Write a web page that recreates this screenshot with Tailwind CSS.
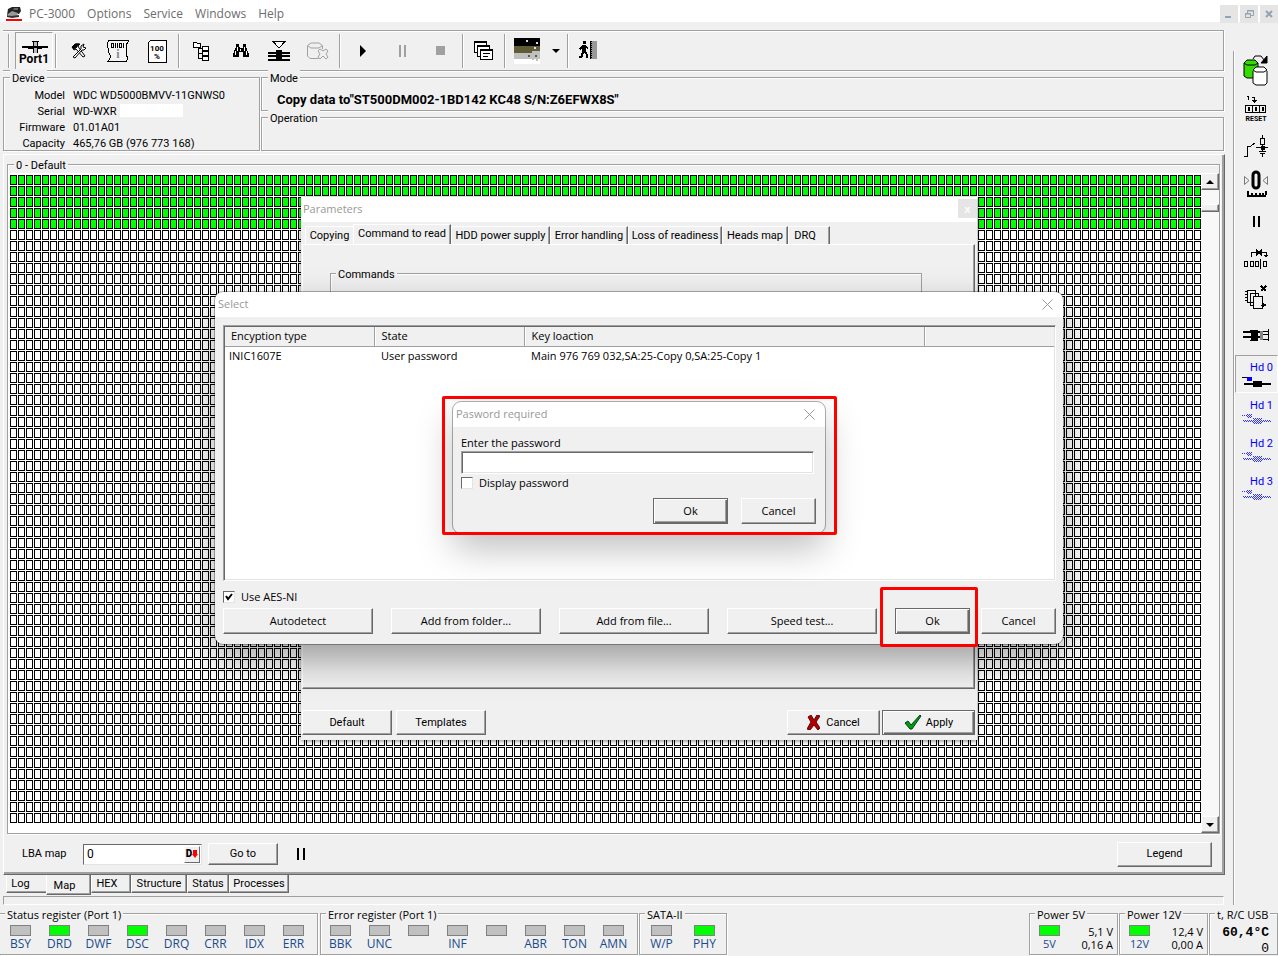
<!DOCTYPE html>
<html lang="en">

<head>
    <meta charset="UTF-8">
    <meta name="viewport" content="width=device-width, initial-scale=1.0">
    <title>PC-3000</title>
    <script src="https://cdn.jsdelivr.net/npm/@tailwindcss/browser@4"></script>
</head>

<body class="bg-[#f0f0f0] text-black font-['Roboto',sans-serif] text-[11px] leading-4">
    <div class="relative flex flex-col min-h-screen overflow-hidden">

        <!-- menu -->
        <header class="flex items-center bg-white h-[22px] pl-1.5 pt-1.5 font-['Open_Sans',sans-serif] text-xs text-[#6d6d6d]">
            <svg class="mr-[7px]" width="16" height="16" viewBox="0 0 16 16">
                <path d="M2 3L6 1H14L15 5L13 8L5 7L1 9Z" fill="#222" />
                <path d="M2 8L6 5L12 7L11 10L4 11Z" fill="#999" />
                <path d="M1 9L5 10L13 9V11L6 12L1 11Z" fill="#333" />
                <path d="M8 2H12V4H7Z" fill="#666" />
                <path d="M0 14H16" stroke="#f00" stroke-width="2" />
            </svg>
            <nav class="flex gap-3">
                <a href="#">PC-3000</a>
                <a href="#">Options</a>
                <a href="#">Service</a>
                <a href="#">Windows</a>
                <a href="#">Help</a>
            </nav>
            <div class="flex gap-0.5 ml-auto">
                <button class="w-[18px] h-[18px] bg-[#e5e5e5]" aria-label="Minimize"><svg width="18" height="18"><path d="M5 12H11" stroke="#94a3b3" stroke-width="2" /></svg></button>
                <button class="w-[18px] h-[18px] bg-[#e5e5e5]" aria-label="Restore"><svg width="18" height="18" fill="none" stroke="#94a3b3"><path d="M7.500 8V5.500H13.500V10.500H11M7 6H14M5.500 8.500H10.500V12.500H5.500ZM5 9H11" /></svg></button>
                <button class="w-[18px] h-[18px] bg-[#e5e5e5]" aria-label="Close"><svg width="18" height="18"><path d="M6 6L12 12M12 6L6 12" stroke="#94a3b3" stroke-width="2" /></svg></button>
            </div>
        </header>

        <div class="flex flex-1">
            <main class="flex flex-col flex-1 min-w-0 pl-[3px] pr-[9px] pt-2">

                <!-- toolbar -->
                <div class="flex items-center h-[41px] border-y border-r border-[#a0a0a0] shadow-[1px_1px_#fff,inset_0_1px_#fff] pl-[5px]">
                    <div class="w-0.5 h-[34px] border-l border-[#a0a0a0] bg-white mr-[5px]"></div>
                    <button class="w-[38px] h-[38px] border border-t-[#a0a0a0] border-l-[#a0a0a0] border-r-white border-b-white bg-[#f4f4f4]" aria-label="Port1">
                        <svg width="36" height="36" shape-rendering="crispEdges">
                            <path d="M6 14H32M12 15H26" stroke="#000" stroke-width="2" />
                            <path d="M18 8H21V20H18Z" fill="#bbb" />
                            <path d="M17.500 8V20M21.500 8V20M16 8.500H23" stroke="#000" fill="none" />
                            <path d="M6 14H32" stroke="#000" stroke-width="2" />
                            <text x="18" y="30" text-anchor="middle" font-family="Roboto" font-weight="bold" font-size="12">Port1</text>
                        </svg>
                    </button>
                    <div class="w-0.5 h-[34px] border-l border-[#a0a0a0] bg-white mx-0.5"></div>
                    <button class="w-[39px] flex justify-center" aria-label="Utilities">
                        <svg width="16" height="16" fill="none" stroke="#000">
                            <path d="M1 4L5 1H9L7 3L8 5L14 13L12 14L5 6L3 7Z" fill="#fff" />
                            <path d="M2 14L10 6L10 3L13 1L12 4L15 5L13 7H11L4 15Z" fill="#fff" />
                            <path d="M1 4L4 1H8L5 5L3 6Z" fill="#000" />
                        </svg>
                    </button>
                    <button class="w-[39px] flex justify-center" aria-label="Information">
                        <svg width="24" height="24" fill="none" stroke="#000" shape-rendering="crispEdges">
                            <path d="M3 1.500H22V3L20 6V16L22 19L20 22.500H2L4 19V16L2 12V9L1 4Z" fill="#f4f4f4" />
                            <path d="M5.500 4.500H7.500V8.500H5.500ZM9.500 4V9M11.500 4V9M13.500 4.500H15.500V8.500H13.500ZM17.500 4V9" />
                            <text x="12" y="19" text-anchor="middle" font-family="Liberation Serif" font-weight="bold" font-size="12" fill="#888" stroke="none">i</text>
                        </svg>
                    </button>
                    <button class="w-[39px] flex justify-center" aria-label="Progress">
                        <svg width="20" height="24" shape-rendering="crispEdges">
                            <path d="M1 4L4 1H19V23H1Z" fill="#fff" stroke="#000" />
                            <text x="10" y="12" text-anchor="middle" font-family="Roboto" font-weight="bold" font-size="8">100</text>
                            <text x="10" y="20" text-anchor="middle" font-family="Roboto" font-weight="bold" font-size="8">%</text>
                        </svg>
                    </button>
                    <div class="w-0.5 h-[34px] border-l border-[#a0a0a0] bg-white mx-0.5"></div>
                    <button class="w-[39px] flex justify-center" aria-label="Tree">
                        <svg width="17" height="20" fill="#fff" stroke="#000" shape-rendering="crispEdges">
                            <path d="M.5 1.500H3.500L4.500 2.500H7.500V6.500H.5ZM9.500 5.500H15.500V9.500H9.500ZM9.500 10.500H15.500V14.500H9.500ZM9.500 15.500H15.500V19.500H9.500Z" />
                            <path d="M5.500 7V17.500H9M5 12.500H9M5 7.500H9M12 5H16M12 10H16M12 15H16" fill="none" />
                        </svg>
                    </button>
                    <button class="w-[39px] flex justify-center" aria-label="Search">
                        <svg width="16" height="16" shape-rendering="crispEdges">
                            <path d="M3 1H6V4L7 5H9L10 4V1H13V4L16 11V14H10V9H6V14H0V11L3 4Z" />
                            <path d="M4.500 4V8M2.500 8V12M11.500 4V8M13.500 8V12M7.500 6V8" stroke="#fff" />
                        </svg>
                    </button>
                    <button class="w-[38px] flex justify-center" aria-label="Drive">
                        <svg width="22" height="22" shape-rendering="crispEdges">
                            <path d="M5 1.500H17L11 8Z" fill="#fff" stroke="#000" />
                            <path d="M0 12.500H22M0 19.500H22" stroke="#000" stroke-width="2" />
                            <path d="M0 15.500H22" stroke="#000" stroke-width="2" />
                            <path d="M8 10H14V21H8Z" />
                        </svg>
                    </button>
                    <button class="w-[39px] flex justify-center" aria-label="Clear database" disabled>
                        <svg width="24" height="20" fill="none" stroke="#a0a0a0">
                            <path d="M1.500 5V15L4 17.500H12L14 16M16.500 8V5" />
                            <path d="M1.500 4.500L5 2H13L16.500 4.500L13 7H5Z" />
                            <path d="M14 8L17 10L20 8L22 10L20 13L22 16L20 18L17 15L14 18L12 16L14 13L12 10Z" fill="#f0f0f0" />
                        </svg>
                    </button>
                    <div class="w-0.5 h-[34px] border-l border-[#a0a0a0] bg-white mx-0.5"></div>
                    <button class="w-[39px] flex justify-center" aria-label="Start"><svg width="7" height="12"><path d="M1 0L7 6L1 12Z" /></svg></button>
                    <button class="w-[39px] flex justify-center" aria-label="Pause" disabled><svg width="8" height="12"><path d="M2 0V12M7 0V12" stroke="#a0a0a0" stroke-width="2" /></svg></button>
                    <button class="w-[39px] flex justify-center" aria-label="Stop" disabled><svg width="9" height="9"><path d="M0 0H9V9H0Z" fill="#a0a0a0" /></svg></button>
                    <div class="w-0.5 h-[34px] border-l border-[#a0a0a0] bg-white mx-0.5"></div>
                    <button class="w-9 flex justify-center" aria-label="Windows">
                        <svg width="20" height="20" fill="#fff" stroke="#000" shape-rendering="crispEdges">
                            <path d="M.5 .5H12.500V11.500H.5Z" />
                            <path d="M0 1.500H13" />
                            <path d="M3.500 4.500H15.500V15.500H3.500Z" />
                            <path d="M3 5.500H16" />
                            <path d="M6.500 8.500H18.500V18.500H6.500Z" />
                            <path d="M6 9.500H19M9 12.500H16M9 15.500H14" />
                        </svg>
                    </button>
                    <div class="w-0.5 h-[34px] border-l border-[#a0a0a0] bg-white mx-0.5"></div>
                    <button class="w-[38px] flex justify-center" aria-label="Map view">
                        <svg width="26" height="26" shape-rendering="crispEdges">
                            <path d="M0 0H26V8H0Z" />
                            <path d="M0 8H26V13H18V15H0Z" fill="#5f5c36" />
                            <path d="M0 15H18V13H26V21H0Z" fill="#c0c0c0" />
                            <path d="M0 21H26V26H0Z" fill="#fff" />
                            <path d="M12 2H14V4H12ZM22 4H24V6H22ZM20 9H22V11H20Z" fill="#ddd" />
                            <path d="M6 13H8V15H6ZM14 17H16V19H14ZM21 17H23V19H21Z" fill="#5f5c36" />
                            <path d="M18 20H20V22H18ZM22 21H24V23H22Z" fill="#c0c0c0" />
                        </svg>
                    </button>
                    <button class="w-5 flex justify-center" aria-label="Map view options"><svg width="8" height="4"><path d="M0 0H8L4 4Z" /></svg></button>
                    <div class="w-0.5 h-[34px] border-l border-[#a0a0a0] bg-white mx-px"></div>
                    <button class="w-9 flex justify-center" aria-label="Exit">
                        <svg width="19" height="19" shape-rendering="crispEdges">
                            <path d="M4 0H7V3H4ZM3 4H7L9 7L8 8L7 7V10L9 14V17H7V14L5 12L3 17H0V15H2L3 10V7L1 9L0 8Z" />
                            <path d="M11 0H18V18H11Z" fill="#999" />
                            <path d="M12 0V18" stroke="#000" stroke-width="2" stroke-dasharray="1 1" />
                            <path d="M11.500 0V18" stroke="#000" />
                        </svg>
                    </button>
                </div>

                <!-- device / mode / operation -->
                <div class="flex gap-px -mt-0.5">
                    <fieldset class="w-[257px] border border-[#a0a0a0] shadow-[1px_1px_#fff,inset_1px_1px_#fff] h-[82px] pt-[3px]">
                        <legend class="ml-1.5 px-0.5 pt-1 leading-3 bg-[#f0f0f0]">Device</legend>
                        <dl class="grid grid-cols-[61px_1fr] gap-x-2">
                            <dt class="text-right">Model</dt>
                            <dd>WDC WD5000BMVV-11GNWS0</dd>
                            <dt class="text-right">Serial</dt>
                            <dd class="flex">WD-WXR<span class="bg-white w-[63px] h-[13px] ml-1"></span></dd>
                            <dt class="text-right">Firmware</dt>
                            <dd>01.01A01</dd>
                            <dt class="text-right">Capacity</dt>
                            <dd>465,76 GB (976 773 168)</dd>
                        </dl>
                    </fieldset>
                    <div class="flex-1 flex flex-col">
                        <fieldset class="border border-[#a0a0a0] shadow-[1px_1px_#fff,inset_1px_1px_#fff] h-[42px]">
                            <legend class="ml-1.5 px-0.5 pt-1 leading-3 bg-[#f0f0f0]">Mode</legend>
                            <p class="pl-[15px] pt-[7px] text-[13px] leading-4 font-bold">Copy data to"ST500DM002-1BD142 KC48 S/N:Z6EFWX8S"</p>
                        </fieldset>
                        <fieldset class="border border-[#a0a0a0] shadow-[1px_1px_#fff,inset_1px_1px_#fff] h-[42px] -mt-0.5">
                            <legend class="ml-1.5 px-0.5 pt-1 leading-3 bg-[#f0f0f0]">Operation</legend>
                        </fieldset>
                    </div>
                </div>

                <!-- surface map -->
                <section class="flex-1 flex flex-col mt-[3px] -mr-px border border-t-white border-l-white border-r-[#696969] border-b-[#696969] shadow-[inset_-2px_-2px_#a0a0a0]">
                    <fieldset class="flex-1 flex flex-col ml-[3px] mr-1 mt-px border border-[#a0a0a0] shadow-[inset_1px_1px_#fff,1px_1px_#fff] min-w-0">
                        <legend class="ml-1.5 px-0.5 pt-1 leading-3 bg-[#f0f0f0]">0 - Default</legend>
                        <div class="flex flex-1 pt-px">
                            <div class="flex-1 bg-white pl-0.5 pt-0.5">
                                <svg class="block w-full" height="649" shape-rendering="crispEdges">
                                    <defs>
                                        <pattern id="cell" width="8" height="11" patternUnits="userSpaceOnUse">
                                            <path d="M0 0H7V10H0ZM1 1V9H6V1Z" fill-rule="evenodd" />
                                        </pattern>
                                        <pattern id="done" width="8" height="11" patternUnits="userSpaceOnUse">
                                            <path d="M0 0H7V10H0Z" />
                                            <path d="M1 1H6V9H1Z" fill="#0f0" />
                                        </pattern>
                                    </defs>
                                    <rect width="100%" height="55" fill="url(#done)" />
                                    <rect y="55" width="100%" height="594" fill="url(#cell)" />
                                </svg>
                            </div>
                            <div class="w-[18px] flex flex-col bg-[#f8f8f8]">
                                <button class="h-[17px] flex items-center justify-center bg-[#f0f0f0] border border-t-white border-l-white border-r-[#696969] border-b-[#696969] shadow-[inset_-1px_-1px_#a0a0a0]" aria-label="Scroll up"><svg width="8" height="4"><path d="M0 4H8L4 0Z" /></svg></button>
                                <div class="h-2 mt-3.5 bg-[#f0f0f0] border border-t-white border-l-white border-r-[#696969] border-b-[#696969] shadow-[inset_-1px_-1px_#a0a0a0]"></div>
                                <button class="h-[17px] mt-auto flex items-center justify-center bg-[#f0f0f0] border border-t-white border-l-white border-r-[#696969] border-b-[#696969] shadow-[inset_-1px_-1px_#a0a0a0]" aria-label="Scroll down"><svg width="8" height="4"><path d="M0 0H8L4 4Z" /></svg></button>
                            </div>
                        </div>
                    </fieldset>
                    <div class="flex items-center h-10 pl-[18px] pr-3">
                        <label for="lba" class="w-[61px]">LBA map</label>
                        <div class="flex w-[119px] h-[21px] bg-white border border-t-[#696969] border-l-[#696969] border-r-[#e3e3e3] border-b-[#e3e3e3] p-px">
                            <input id="lba" class="flex-1 min-w-0 pl-0.5 text-xs outline-none" value="0">
                            <button class="w-4 bg-[#f0f0f0] border border-t-white border-l-white border-r-[#696969] border-b-[#696969] flex items-center justify-center text-[10px] font-black" aria-label="Decimal">D<svg width="6" height="8"><path d="M1 0H5V4H6L3 8L0 4H1Z" fill="#f00" /></svg></button>
                        </div>
                        <button class="w-[70px] h-[22px] ml-1.5 border border-t-white border-l-white border-r-[#696969] border-b-[#696969] shadow-[inset_-1px_-1px_#a0a0a0]">Go to</button>
                        <button class="ml-[19px]" aria-label="Pause map"><svg width="8" height="12"><path d="M1 0V12M7 0V12" stroke="#000" stroke-width="2" /></svg></button>
                        <button class="w-[95px] h-[25px] ml-auto border border-t-white border-l-white border-r-[#696969] border-b-[#696969] shadow-[inset_-1px_-1px_#a0a0a0]">Legend</button>
                    </div>
                </section>

                <!-- page tabs -->
                <div class="flex items-start h-[21px] pl-[3px]">
                    <button class="h-[18px] w-10 pr-3 border-l border-b border-l-white border-b-[#696969] shadow-[inset_0_-1px_#a0a0a0]">Log</button>
                    <button class="h-5 w-[45px] pr-2 pt-0.5 border border-t-0 border-l-white border-[#696969] shadow-[inset_-1px_-1px_#a0a0a0]">Map</button>
                    <button class="h-[18px] w-10 pr-2 border border-t-0 border-l-white border-[#696969] shadow-[inset_-1px_-1px_#a0a0a0]">HEX</button>
                    <button class="h-[18px] w-14 border border-t-0 border-l-white border-[#696969] shadow-[inset_-1px_-1px_#a0a0a0]">Structure</button>
                    <button class="h-[18px] w-[42px] border border-t-0 border-l-white border-[#696969] shadow-[inset_-1px_-1px_#a0a0a0]">Status</button>
                    <button class="h-[18px] w-[60px] border border-t-0 border-l-white border-[#696969] shadow-[inset_-1px_-1px_#a0a0a0]">Processes</button>
                </div>
                <div class="h-[9px] border border-t-[#a0a0a0] border-l-[#a0a0a0] border-r-white border-b-white"></div>
            </main>

            <!-- side toolbar -->
            <aside class="w-[45px] mt-[29px] border-l border-[#a0a0a0] shadow-[inset_1px_0_#fff] flex flex-col items-center">
                <button class="h-[38px] flex items-center" aria-label="Copy data">
                    <svg width="26" height="31" stroke="#000">
                        <path d="M1 8V21L4 23H13L15 21V8" fill="#33dd00" />
                        <path d="M1 8L4 5H12L15 8L12 10H4Z" fill="#33dd00" />
                        <path d="M10 16V28L13 30H22L24 28V16" fill="#fff" />
                        <path d="M10 15L13 12H21L24 15L21 17H13Z" fill="#fff" />
                        <path d="M10 4L12 1H18L21 5" fill="none" />
                        <path d="M24 1V8H18Z" fill="#000" />
                    </svg>
                </button>
                <button class="h-[38px] flex items-center" aria-label="Reset">
                    <svg width="24" height="28" fill="none" stroke="#000" shape-rendering="crispEdges">
                        <path d="M3 2.500H4.500V6M8 3.500H10.500V7" />
                        <path d="M8 6H13L10.500 9Z" fill="#000" stroke="none" />
                        <path d="M1 11.500H22M1 18.500H22M1.500 12V18M8.500 12V18M15.500 12V18M21.500 12V18" />
                        <path d="M4.500 13.500H5.500V16.500H4.500ZM11.500 13.500H12.500V16.500H11.500ZM18.500 13.500H19.500V16.500H18.500Z" />
                        <text x="12" y="27" text-anchor="middle" font-family="Roboto" font-weight="bold" font-size="7" fill="#000" stroke="none">RESET</text>
                    </svg>
                </button>
                <button class="h-[37px] flex items-center" aria-label="Power switch">
                    <svg width="24" height="26" fill="none" stroke="#000" shape-rendering="crispEdges">
                        <path d="M0 23.500H4M3.500 24V13.500H6L11 10M12 14.500H24M18.500 2V5M16.500 5H20.500V11H16.500ZM18.500 11V18M15 18.500H22M16 20.500H21M18.500 20V24" />
                        <path d="M17 13H20V16H17Z" fill="#000" />
                    </svg>
                </button>
                <button class="h-[38px] flex items-center" aria-label="Head calibration">
                    <svg width="24" height="28" fill="none" stroke="#000">
                        <path d="M.5 7.500V15.500L5 11.500ZM23.500 7.500V15.500L19 11.500Z" stroke="#777" />
                        <rect x="9" y="3" width="6" height="16" rx="3" stroke-width="3" />
                        <path d="M3 26.500H22M3.500 22V26M7.500 24V26M11.500 24V26M15.500 24V26M18.500 24V26M21.500 22V26" stroke-width="2" shape-rendering="crispEdges" />
                    </svg>
                </button>
                <button class="h-[38px] flex items-center" aria-label="Pause"><svg width="7" height="11"><path d="M1 0V11M6 0V11" stroke="#000" stroke-width="2" /></svg></button>
                <button class="h-[37px] flex items-center" aria-label="Skip sector">
                    <svg width="24" height="20" fill="none" stroke="#000" shape-rendering="crispEdges">
                        <path d="M7.500 8V3.500H22.500V7M.5 12.500H3.500V17.500H.5ZM6.500 12.500H9.500V17.500H6.500ZM11.500 12.500H14.500V17.500H11.500ZM16.500 10V20M19.500 12.500H22.500V17.500H19.500Z" />
                        <path d="M12 1L18 6M18 1L12 6" stroke-width="2" />
                        <path d="M19 6H24L22 9Z" fill="#000" stroke="none" />
                    </svg>
                </button>
                <button class="h-10 flex items-center" aria-label="Cancel pages">
                    <svg width="24" height="24" fill="#f0f0f0" stroke="#000" shape-rendering="crispEdges">
                        <path d="M3.500 5.500H11.500V17.500H3.500ZM6.500 8.500H14.500V20.500H6.500Z" />
                        <path d="M9.500 11.500H18.500V23.500H9.500Z" />
                        <path d="M1 6.500H3M1 9.500H3M1 12.500H3M1 15.500H3M17 20.500H22" />
                        <path d="M17 1L22 6M22 1L17 6" stroke-width="2" />
                        <path d="M18 18L22 20L18 22Z" fill="#000" />
                    </svg>
                </button>
                <button class="h-9 flex items-center" aria-label="Heads">
                    <svg width="28" height="14" fill="none" stroke="#000" shape-rendering="crispEdges">
                        <path d="M1 4H20M1 9H20" stroke-width="2" />
                        <path d="M8 2.500H16M8 12.500H16M20 6.500H27M19 3.500H26M19 11.500H26M26.500 1V13" />
                        <path d="M9 3H15V11H9Z" fill="#000" />
                        <path d="M19 3V12" stroke="#888" stroke-width="3" />
                    </svg>
                </button>
                <div id="heads" class="self-stretch flex flex-col pl-px pt-0.5 text-[#0000ff]"></div>
            </aside>
        </div>

        <!-- registers -->
        <footer class="flex gap-0.5 h-[51px] pb-px font-['Open_Sans',sans-serif]">
            <fieldset class="w-[318px] min-w-0 border border-l-0 border-[#a0a0a0] shadow-[1px_1px_#fff,inset_0_1px_#fff]">
                <legend class="ml-[5px] px-0.5 pt-1 leading-3 bg-[#f0f0f0]">Status register (Port 1)</legend>
                <div id="status" class="flex pl-px pt-1"></div>
            </fieldset>
            <fieldset class="w-[318px] min-w-0 border border-[#a0a0a0] shadow-[1px_1px_#fff,inset_1px_1px_#fff]">
                <legend class="ml-[5px] px-0.5 pt-1 leading-3 bg-[#f0f0f0]">Error register (Port 1)</legend>
                <div id="error" class="flex pt-1"></div>
            </fieldset>
            <fieldset class="w-[88px] min-w-0 -ml-px border border-[#a0a0a0] shadow-[1px_1px_#fff,inset_1px_1px_#fff]">
                <legend class="ml-[5px] px-0.5 pt-1 leading-3 bg-[#f0f0f0]">SATA-II</legend>
                <div id="sata" class="flex gap-1 pl-0.5 pt-1"></div>
            </fieldset>
            <fieldset class="w-[89px] min-w-0 ml-auto border border-[#a0a0a0] shadow-[1px_1px_#fff,inset_1px_1px_#fff]">
                <legend class="ml-[5px] px-0.5 pt-1 leading-3 bg-[#f0f0f0]">Power 5V</legend>
                <div class="flex justify-between pr-1">
                    <div id="p5" class="pt-1"></div>
                    <p class="text-right leading-[13px] pt-1">5,1 V<br>0,16 A</p>
                </div>
            </fieldset>
            <fieldset class="w-[89px] min-w-0 -ml-px border border-[#a0a0a0] shadow-[1px_1px_#fff,inset_1px_1px_#fff]">
                <legend class="ml-[5px] px-0.5 pt-1 leading-3 bg-[#f0f0f0]">Power 12V</legend>
                <div class="flex justify-between pr-1">
                    <div id="p12" class="pt-1"></div>
                    <p class="text-right leading-[13px] pt-1">12,4 V<br>0,00 A</p>
                </div>
            </fieldset>
            <fieldset class="w-[69px] min-w-0 -ml-px border border-[#a0a0a0] shadow-[inset_1px_1px_#fff]">
                <legend class="ml-[5px] px-0.5 pt-1 leading-3 bg-[#f0f0f0] whitespace-nowrap">t, R/C USB</legend>
                <p class="text-right pr-2 pt-1 font-['Liberation_Mono',monospace] text-[13px]"><b>60,4°C</b><br>0</p>
            </fieldset>
        </footer>

        <!-- parameters window -->
        <section class="absolute left-[301px] top-[197px] w-[676px] h-[543px] flex flex-col bg-[#f0f0f0] shadow-[0_1px_4px_rgba(0,0,0,0.5)]">
            <div class="flex justify-between bg-white h-[25px] pl-0.5 pt-0.5 font-['Open_Sans',sans-serif] text-[#999]">
                <h2 class="leading-5">Parameters</h2>
                <button class="w-[19px] h-[19px] bg-[#e5e5e5] text-[#fafafa] font-bold leading-4" aria-label="Close parameters">x</button>
            </div>
            <div class="flex items-end h-[22px] pl-1">
                <button class="h-[18px] w-12 border-t border-l border-white">Copying</button>
                <button class="h-5 w-[98px] pb-0.5 border-t border-l border-white border-r border-r-[#696969] shadow-[inset_-1px_0_#a0a0a0]">Command to read</button>
                <button class="h-[18px] w-[99px] border-t border-l border-white border-r border-r-[#696969] shadow-[inset_-1px_0_#a0a0a0]">HDD power supply</button>
                <button class="h-[18px] w-[78px] border-t border-l border-white border-r border-r-[#696969] shadow-[inset_-1px_0_#a0a0a0]">Error handling</button>
                <button class="h-[18px] w-[94px] border-t border-l border-white border-r border-r-[#696969] shadow-[inset_-1px_0_#a0a0a0]">Loss of readiness</button>
                <button class="h-[18px] w-[66px] border-t border-l border-white border-r border-r-[#696969] shadow-[inset_-1px_0_#a0a0a0]">Heads map</button>
                <button class="h-[18px] w-[42px] pr-2 border-t border-l border-white border-r border-r-[#696969] shadow-[inset_-1px_0_#a0a0a0]">DRQ</button>
            </div>
            <div class="flex-1 mx-px mr-0.5 border border-t-white border-l-white border-r-[#696969] border-b-[#696969] shadow-[inset_-1px_-1px_#a0a0a0] pt-5 pl-[27px] pr-[52px]">
                <fieldset class="h-20 border border-[#a0a0a0] shadow-[inset_1px_1px_#fff]">
                    <legend class="ml-[5px] px-0.5 pt-1 leading-3 bg-[#f0f0f0]">Commands</legend>
                </fieldset>
            </div>
            <div class="flex gap-1 pt-[21px] pb-[5px] pl-px pr-0.5">
                <button class="w-[90px] h-[25px] border border-t-white border-l-white border-r-[#696969] border-b-[#696969] shadow-[inset_-1px_-1px_#a0a0a0]">Default</button>
                <button class="w-[90px] h-[25px] border border-t-white border-l-white border-r-[#696969] border-b-[#696969] shadow-[inset_-1px_-1px_#a0a0a0]">Templates</button>
                <button class="w-[93px] h-[25px] ml-auto flex items-center justify-center gap-1.5 border border-t-white border-l-white border-r-[#696969] border-b-[#696969] shadow-[inset_-1px_-1px_#a0a0a0]">
                    <svg width="13" height="15"><path d="M1 2L4 0L7 5L10 0L13 1L9 7L13 13L11 15L7 10L3 15L0 14L4 7Z" fill="#b00000" stroke="#600" /></svg>Cancel
                </button>
                <button class="w-[93px] h-[25px] -ml-0.5 flex items-center justify-center gap-1 border border-[#696969] shadow-[inset_1px_1px_#fff,inset_-1px_-1px_#696969,inset_-2px_-2px_#a0a0a0]">
                    <svg width="18" height="15"><path d="M1 8L4 6L7 10L16 0L17 1L8 14H6Z" fill="#00a000" stroke="#003c20" /></svg>Apply
                </button>
            </div>
        </section>

        <!-- key selection window -->
        <section class="absolute left-[215px] top-[292px] w-[848px] h-[352px] flex flex-col bg-[#f0f0f0] rounded-lg outline outline-black/30 shadow-[0_16px_36px_rgba(0,0,0,0.35)] font-['Open_Sans',sans-serif]">
            <div class="flex items-center justify-between h-[25px] bg-white rounded-t-lg pl-[3px] pr-2.5 pb-px text-[#999]">
                <h2>Select</h2>
                <button aria-label="Close select"><svg width="11" height="11"><path d="M.5 .5L10.500 10.500M10.500 .5L.5 10.500" stroke="#999" /></svg></button>
            </div>
            <div class="flex-1 mt-2 ml-2 mr-[7px] bg-white border border-t-[#a0a0a0] border-l-[#a0a0a0] border-r-white border-b-white shadow-[inset_1px_1px_#696969,inset_-1px_-1px_#e3e3e3] p-px">
                <table class="w-full table-fixed text-left">
                    <thead>
                        <tr class="h-[19px] bg-[#f0f0f0]">
                            <th class="w-[149px] pl-1.5 font-normal leading-[18px] border-r border-b border-[#a0a0a0]">Encyption type</th>
                            <th class="w-[150px] pl-[7px] font-normal leading-[18px] border-r border-b border-[#a0a0a0] shadow-[inset_1px_0_#fff]">State</th>
                            <th class="w-[400px] pl-[7px] font-normal leading-[18px] border-r border-b border-[#a0a0a0] shadow-[inset_1px_0_#fff]">Key loaction</th>
                            <th class="border-b border-[#a0a0a0] shadow-[inset_1px_0_#fff]"></th>
                        </tr>
                    </thead>
                    <tbody>
                        <tr class="h-5">
                            <td class="pl-1">INIC1607E</td>
                            <td class="pl-[7px]">User password</td>
                            <td class="pl-[7px]">Main 976 769 032,SA:25-Copy 0,SA:25-Copy 1</td>
                            <td></td>
                        </tr>
                    </tbody>
                </table>
            </div>
            <label class="flex items-center gap-1.5 h-4 mt-2 ml-2">
                <span class="relative flex">
                    <input type="checkbox" checked class="appearance-none w-3 h-3 bg-white border border-t-[#696969] border-l-[#696969] border-r-[#e3e3e3] border-b-[#e3e3e3]">
                    <svg class="absolute left-0.5 top-0.5" width="8" height="8"><path d="M1 3L3 6L7 1" fill="none" stroke="#000" stroke-width="2" /></svg>
                </span>
                Use AES-NI
            </label>
            <div class="flex gap-[18px] pl-2 pr-[7px] pt-[3px] pb-2.5">
                <button class="flex-1 h-[26px] border border-t-white border-l-white border-r-[#696969] border-b-[#696969] shadow-[inset_-1px_-1px_#a0a0a0]">Autodetect</button>
                <button class="flex-1 h-[26px] border border-t-white border-l-white border-r-[#696969] border-b-[#696969] shadow-[inset_-1px_-1px_#a0a0a0]">Add from folder...</button>
                <button class="flex-1 h-[26px] border border-t-white border-l-white border-r-[#696969] border-b-[#696969] shadow-[inset_-1px_-1px_#a0a0a0]">Add from file...</button>
                <button class="flex-1 h-[26px] border border-t-white border-l-white border-r-[#696969] border-b-[#696969] shadow-[inset_-1px_-1px_#a0a0a0]">Speed test...</button>
                <div class="flex gap-[11px]">
                    <button class="w-[75px] h-[26px] border border-[#696969] shadow-[inset_1px_1px_#fff,inset_-1px_-1px_#696969,inset_-2px_-2px_#a0a0a0]">Ok</button>
                    <button class="w-[75px] h-[26px] border border-t-white border-l-white border-r-[#696969] border-b-[#696969] shadow-[inset_-1px_-1px_#a0a0a0]">Cancel</button>
                </div>
            </div>
        </section>

        <!-- password window -->
        <section class="absolute left-[453px] top-[402px] w-[372px] h-[131px] flex flex-col bg-[#f0f0f0] rounded-lg outline outline-black/30 shadow-[0_16px_36px_rgba(0,0,0,0.25)] font-['Open_Sans',sans-serif]">
            <div class="flex items-center justify-between h-[25px] bg-white rounded-t-lg pl-[3px] pr-2.5 pb-px text-[#999]">
                <h2>Pasword required</h2>
                <button aria-label="Close password"><svg width="11" height="11"><path d="M.5 .5L10.500 10.500M10.500 .5L.5 10.500" stroke="#999" /></svg></button>
            </div>
            <div class="flex flex-col pt-2 pl-2 pr-[9px]">
                <label for="password">Enter the password</label>
                <input id="password" type="password" class="h-[23px] mr-0.5 bg-white border border-t-[#a0a0a0] border-l-[#a0a0a0] border-r-white border-b-white shadow-[inset_1px_1px_#696969,inset_-1px_-1px_#e3e3e3] outline-none">
                <label class="flex items-center gap-1.5 pt-px">
                    <input type="checkbox" class="appearance-none w-3 h-3 bg-white border border-t-[#696969] border-l-[#696969] border-r-[#e3e3e3] border-b-[#e3e3e3]">
                    Display password
                </label>
                <div class="flex justify-end gap-[13px] pt-[7px]">
                    <button class="w-[75px] h-[26px] border border-[#696969] shadow-[inset_1px_1px_#fff,inset_-1px_-1px_#696969,inset_-2px_-2px_#a0a0a0]">Ok</button>
                    <button class="w-[75px] h-[26px] border border-t-white border-l-white border-r-[#696969] border-b-[#696969] shadow-[inset_-1px_-1px_#a0a0a0]">Cancel</button>
                </div>
            </div>
        </section>

        <!-- highlights -->
        <div class="absolute left-[442px] top-[396px] w-[395px] h-[139px] border-3 border-[#ff0000] rounded-xs pointer-events-none"></div>
        <div class="absolute left-[880px] top-[587px] w-[98px] h-[60px] border-3 border-[#ff0000] rounded-xs pointer-events-none"></div>
    </div>
</body>

<script>
    const registers = {
        status: ["BSY", "DRD*", "DWF", "DSC*", "DRQ", "CRR", "IDX", "ERR"],
        error: ["BBK", "UNC", "", "INF", "", "ABR", "TON", "AMN"],
        sata: ["W/P", "PHY*"],
        p5: ["5V*"],
        p12: ["12V*"],
    };
    // a trailing * marks a lit indicator
    for (const id in registers) {
        document.getElementById(id).innerHTML = registers[id].map(name => `
            <div class="w-[39px] flex flex-col items-center text-[#1a4a8a]">
                <span class="w-[21px] h-[11px] border border-[#808080] ${name.endsWith("*") ? "bg-[#00ff00]" : "bg-[#c0c0c0]"}"></span>
                <span class="${id[0] == "p" ? "" : "text-xs"} leading-4">${name.replace("*", "")}</span>
            </div>
        `).join("");
    }

    for (let i = 0; i < 4; i++) {
        document.getElementById("heads").innerHTML += `
            <button class="${i == 0 ? "border-t-[#a0a0a0] border-l-[#a0a0a0] border-r-white border-b-white" : "border-transparent"} border h-[38px] pt-1 pl-1.5 pr-1 flex flex-col">
                <span class="self-end leading-4">Hd ${i}</span>
                ${i == 0 ? `
                <svg width="29" height="12" shape-rendering="crispEdges">
                    <path d="M0 1.500H6" stroke="#000" />
                    <path d="M2 8H29" stroke="#000" stroke-width="2" />
                    <path d="M11 5H20V11H11Z" />
                    <path d="M5 1H10V5H5Z" fill="#00f" />
                </svg>` : `
                <svg width="29" height="12" shape-rendering="crispEdges" stroke="#3333ff">
                    <path d="M0 1.500H5M5 .5H10M6 1.500H10M5 2.500H10M6 3.500H10M1 6.500H29M2 7.500H29M11 4.500H20M12 5.500H20M11 8.500H20M12 9.500H20" stroke-dasharray="1 1" />
                </svg>`}
            </button>
        `;
    }
</script>

</html>
